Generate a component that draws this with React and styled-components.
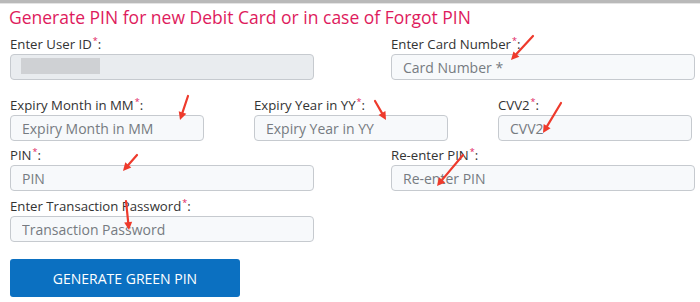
import React from "react";
import styled, { createGlobalStyle } from "styled-components";

const GlobalStyle = createGlobalStyle`
  html, body {
    margin: 0;
    padding: 0;
    background: #fff;
  }
  body {
    font-family: "Open Sans", "Noto Sans", Arial, sans-serif;
    color: #333;
  }
`;

const Page = styled.div`
  position: relative;
  width: 700px;
  height: 302px;
  box-sizing: border-box;
  border-top: 3px solid #b9b9b9;
  overflow: hidden;
  &::before {
    content: "";
    display: block;
    height: 1px;
    background: #e4e4e4;
  }
`;

const Form = styled.form`
  padding: 0 5px 0 10px;
`;

const Title = styled.h3`
  margin: 0 0 0 -1px;
  font-size: 17.5px;
  font-weight: 400;
  line-height: 26px;
  color: #de1b5d;
`;

const Row = styled.div`
  display: grid;
  grid-template-columns: ${(p) => p.cols};
  column-gap: ${(p) => p.gap}px;
  margin-top: ${(p) => p.top}px;
`;

const Field = styled.div`
  display: flex;
  flex-direction: column;
`;

const Label = styled.label`
  font-size: 13.2px;
  line-height: 20px;
  height: 20px;
  color: #333;
  sup {
    color: #e0195e;
    font-size: 9px;
    line-height: 0;
    margin-left: 1px;
  }
`;

const Input = styled.input`
  box-sizing: border-box;
  width: 100%;
  height: 26px;
  padding: 0 11px;
  border: 1px solid #c6cacf;
  border-radius: 4px;
  background: ${(p) => (p.disabled ? "#e9ecef" : "#f7f9fb")};
  font-family: inherit;
  font-size: 14px;
  color: #333;
  outline: none;
  &::placeholder {
    color: #767b81;
  }
`;

const Masked = styled.div`
  position: relative;
`;

const Redaction = styled.span`
  position: absolute;
  left: 11px;
  top: 4px;
  width: 79px;
  height: 16px;
  background: #cfd1d4;
`;

const Button = styled.button`
  display: block;
  margin-top: 17px;
  width: 230px;
  height: 38px;
  border: none;
  border-radius: 3px;
  background: #0b70c1;
  color: #fff;
  font-family: inherit;
  font-size: 14px;
  text-transform: uppercase;
  cursor: pointer;
`;

const Arrows = styled.svg`
  position: absolute;
  left: 0;
  top: 0;
  pointer-events: none;
`;

const arrows = [
  [533, 33, 511, 57],
  [188, 93, 180, 117],
  [375, 98, 386, 117],
  [561, 100, 543, 130],
  [137, 152, 123, 168],
  [463, 152, 437, 183],
  [126, 198, 129, 227],
];

function Arrow({ x1, y1, x2, y2 }) {
  const a = Math.atan2(y2 - y1, x2 - x1);
  const len = 8;
  const w = 4;
  const bx = x2 - len * Math.cos(a);
  const by = y2 - len * Math.sin(a);
  const px = -Math.sin(a) * w;
  const py = Math.cos(a) * w;
  return (
    <g>
      <line x1={x1} y1={y1} x2={bx} y2={by} stroke="#ee3a2c" strokeWidth="2.2" strokeLinecap="round" />
      <polygon
        points={`${x2},${y2} ${bx + px},${by + py} ${bx - px},${by - py}`}
        fill="#ee3a2c"
      />
    </g>
  );
}

function Req({ children, htmlFor }) {
  return (
    <Label htmlFor={htmlFor}>
      {children}
      <sup>*</sup>:
    </Label>
  );
}

export default function App() {
  return (
    <>
      <GlobalStyle />
      <Page>
        <Form onSubmit={(e) => e.preventDefault()}>
          <Title>Generate PIN for new Debit Card or in case of Forgot PIN</Title>

          <Row cols="304px 304px" gap={77} top={4}>
            <Field>
              <Req htmlFor="uid">Enter User ID</Req>
              <Masked>
                <Input id="uid" disabled />
                <Redaction />
              </Masked>
            </Field>
            <Field>
              <Req htmlFor="card">Enter Card Number</Req>
              <Input id="card" placeholder="Card Number *" />
            </Field>
          </Row>

          <Row cols="194px 194px 194px" gap={50} top={15}>
            <Field>
              <Req htmlFor="mm">Expiry Month in MM</Req>
              <Input id="mm" placeholder="Expiry Month in MM" />
            </Field>
            <Field>
              <Req htmlFor="yy">Expiry Year in YY</Req>
              <Input id="yy" placeholder="Expiry Year in YY" />
            </Field>
            <Field>
              <Req htmlFor="cvv">CVV2</Req>
              <Input id="cvv" placeholder="CVV2" />
            </Field>
          </Row>

          <Row cols="304px 304px" gap={77} top={4}>
            <Field>
              <Req htmlFor="pin">PIN</Req>
              <Input id="pin" placeholder="PIN" />
            </Field>
            <Field>
              <Req htmlFor="repin">Re-enter PIN</Req>
              <Input id="repin" placeholder="Re-enter PIN" />
            </Field>
          </Row>

          <Row cols="304px" gap={0} top={5}>
            <Field>
              <Req htmlFor="tpw">Enter Transaction Password</Req>
              <Input id="tpw" placeholder="Transaction Password" />
            </Field>
          </Row>

          <Button type="submit">Generate Green PIN</Button>
        </Form>

        <Arrows width="700" height="302" viewBox="0 0 700 302">
          {arrows.map(([x1, y1, x2, y2], i) => (
            <Arrow key={i} x1={x1} y1={y1} x2={x2} y2={y2} />
          ))}
        </Arrows>
      </Page>
    </>
  );
}
